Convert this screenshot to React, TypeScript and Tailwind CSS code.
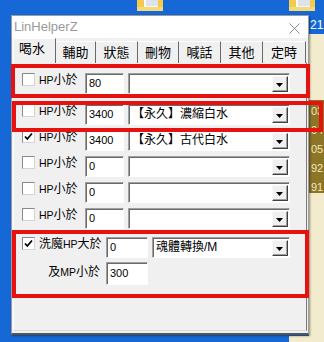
import React from 'react';

const font = { fontFamily: '"Liberation Sans", "Noto Sans CJK TC", sans-serif' };

function CheckBox({ checked }: { checked?: boolean }) {
  return (
    <div className="w-[13px] h-[13px] bg-white border border-t-[#8a8a8a] border-l-[#8a8a8a] border-r-[#d4d4d4] border-b-[#d4d4d4] flex items-center justify-center shrink-0">
      {checked && (
        <svg width="9" height="9" viewBox="0 0 9 9">
          <path d="M1 4.5 L3.3 7 L8 1.5" fill="none" stroke="#000" strokeWidth="1.8" />
        </svg>
      )}
    </div>
  );
}

function Edit({ value, w }: { value: string; w: string }) {
  return (
    <div className={`${w} h-[21px] bg-white border border-t-[#a0a0a0] border-l-[#a0a0a0] border-r-white border-b-white shadow-[inset_1px_1px_0_#6a6a6a] pl-[3px] text-[11px] leading-[19px] text-black shrink-0`}>
      {value}
    </div>
  );
}

function Combo({ value, w }: { value?: string; w: string }) {
  return (
    <div className={`${w} h-[21px] bg-white border border-t-[#a0a0a0] border-l-[#a0a0a0] border-r-white border-b-white shadow-[inset_1px_1px_0_#6a6a6a] flex items-center shrink-0`}>
      <div className="flex-1 pl-[3px] text-[12px] leading-[17px] text-black whitespace-nowrap overflow-hidden">{value}</div>
      <div className="w-[16px] h-[16px] mr-[1px] mt-[1px] bg-[#f0f0f0] border border-t-[#f8f8f8] border-l-[#f8f8f8] border-r-[#404040] border-b-[#404040] shadow-[inset_-1px_-1px_0_#a0a0a0] flex items-center justify-center">
        <svg width="8" height="5" viewBox="0 0 8 5" className="mt-[2px]">
          <path d="M0 0 H7 L3.5 4 Z" fill="#000" />
        </svg>
      </div>
    </div>
  );
}

function HpRow({ checked, value, item }: { checked?: boolean; value: string; item?: string }) {
  return (
    <div className="flex items-start h-[21px]">
      <CheckBox checked={checked} />
      <div className="w-[50px] pl-[4px] text-[12px] leading-[14px] whitespace-nowrap">
        <span className="text-[10.5px]">HP</span>小於
      </div>
      <Edit value={value} w="w-[39px]" />
      <div className="ml-[4px]"><Combo value={item} w="w-[162px]" /></div>
    </div>
  );
}

const tabs = [
  { t: '喝水', w: 'w-[43px]' },
  { t: '輔助', w: 'w-[40px]' },
  { t: '狀態', w: 'w-[42px]' },
  { t: '刪物', w: 'w-[41px]' },
  { t: '喊話', w: 'w-[42px]' },
  { t: '其他', w: 'w-[42px]' },
  { t: '定時', w: 'w-[43px]' },
];

function Folder() {
  return (
    <svg width="30" height="11" viewBox="0 0 30 11">
      <rect x="2" y="0" width="26" height="11" fill="#f3c94e" />
      <rect x="9" y="0" width="14" height="8" fill="#fafafa" />
      <rect x="11" y="0" width="12" height="6" fill="#dde3ea" />
      <rect x="2" y="7" width="26" height="4" fill="#f7d877" />
    </svg>
  );
}

export default function App() {
  return (
    <div className="relative w-[324px] h-[342px] overflow-hidden bg-[#1668d6]" style={font}>
      {/* desktop bits */}
      <div className="absolute left-[135px] top-0"><Folder /></div>
      <div className="absolute left-[287px] top-0"><Folder /></div>
      <div className="absolute left-[310px] top-[18px] text-white text-[12px] leading-[14px]">21</div>
      <div className="absolute left-[309px] top-[34px] w-[15px] h-[66px] bg-[#f3ebcd]" />
      <div className="absolute left-[309px] top-[100px] w-[15px] h-[93px] bg-[#8c7526] text-[#f2e7bb] text-[11px] leading-[19px] pl-[2px] pt-[2px]">
        <div>03</div>
        <div>04</div>
        <div>05</div>
        <div>92</div>
        <div>91</div>
      </div>
      <div className="absolute left-[309px] top-[193px] w-[15px] h-[149px] bg-[#f3ebcd]" />
      <div className="absolute left-[289px] top-[336px] w-[35px] h-[6px] bg-[#f3ebcd]" />

      {/* window */}
      <div className="absolute left-[11px] top-[15px] w-[298px] h-[320px] bg-[#f0f0f0] border border-[#9c9c9c] border-b-[#555] border-b-2 flex flex-col shadow-[1px_1px_2px_rgba(0,0,0,0.4)]">
        <div className="h-[22px] bg-white flex items-center justify-between shrink-0">
          <span className="pl-[2px] text-[13px] text-[#9a9a9a]">LinHelperZ</span>
          <svg width="11" height="11" viewBox="0 0 11 11" className="mr-[8px] mt-[2px]">
            <path d="M0.5 0.5 L10.5 10.5 M10.5 0.5 L0.5 10.5" stroke="#8a8a8a" strokeWidth="1" />
          </svg>
        </div>

        <div className="h-[25px] flex items-end pl-[1px] shrink-0 relative z-10">
          {tabs.map((tab, i) =>
            i === 0 ? (
              <div key={tab.t} className={`${tab.w} h-[25px] bg-[#f0f0f0] border-l border-t border-white border-r border-r-[#6a6a6a] text-[13px] leading-[20px] pl-[5px] text-black`}>
                {tab.t}
              </div>
            ) : (
              <div key={tab.t} className={`${tab.w} h-[22px] bg-[#f0f0f0] border-t border-white border-r border-r-[#6a6a6a] text-[13px] leading-[22px] text-center text-black`}>
                {tab.t}
              </div>
            )
          )}
        </div>

        <div className="flex-1 mx-[1px] mb-[2px] border border-t-white border-l-white border-r-[#7a7a7a] border-b-[#d8d8d8] -mt-[1px] pl-[8px] pt-[10px] flex flex-col relative">
          <HpRow value="80" />
          <div className="mt-[10px] flex flex-col gap-[5px]">
            <HpRow value="3400" item="【永久】濃縮白水" />
            <HpRow checked value="3400" item="【永久】古代白水" />
            <HpRow value="0" />
            <HpRow value="0" />
            <HpRow value="0" />
          </div>

          <div className="mt-[8px] flex flex-col gap-[4px]">
            <div className="flex items-start h-[21px]">
              <CheckBox checked />
              <div className="w-[71px] pl-[4px] text-[12px] leading-[14px] whitespace-nowrap">
                洗魔<span className="text-[10.5px]">HP</span>大於
              </div>
              <Edit value="0" w="w-[42px]" />
              <div className="ml-[4px]"><Combo value="魂體轉換/M" w="w-[138px]" /></div>
            </div>
            <div className="flex items-start h-[23px]">
              <div className="w-[84px] pr-[6px] text-right text-[12px] leading-[14px] pt-[3px] whitespace-nowrap">
                及<span className="text-[10.5px]">MP</span>小於
              </div>
              <Edit value="300" w="w-[42px] h-[23px] leading-[21px]" />
            </div>
          </div>
        </div>

        {/* annotation boxes */}
        <div className="absolute left-[-1px] top-[48px] w-[299px] h-[34px] border-4 border-[#e5120f] pointer-events-none z-20" />
        <div className="absolute left-[0px] top-[85px] w-[311px] h-[31px] border-4 border-[#e5120f] pointer-events-none z-20" />
        <div className="absolute left-[0px] top-[214px] w-[297px] h-[68px] border-4 border-[#e5120f] pointer-events-none z-20" />
      </div>
    </div>
  );
}
